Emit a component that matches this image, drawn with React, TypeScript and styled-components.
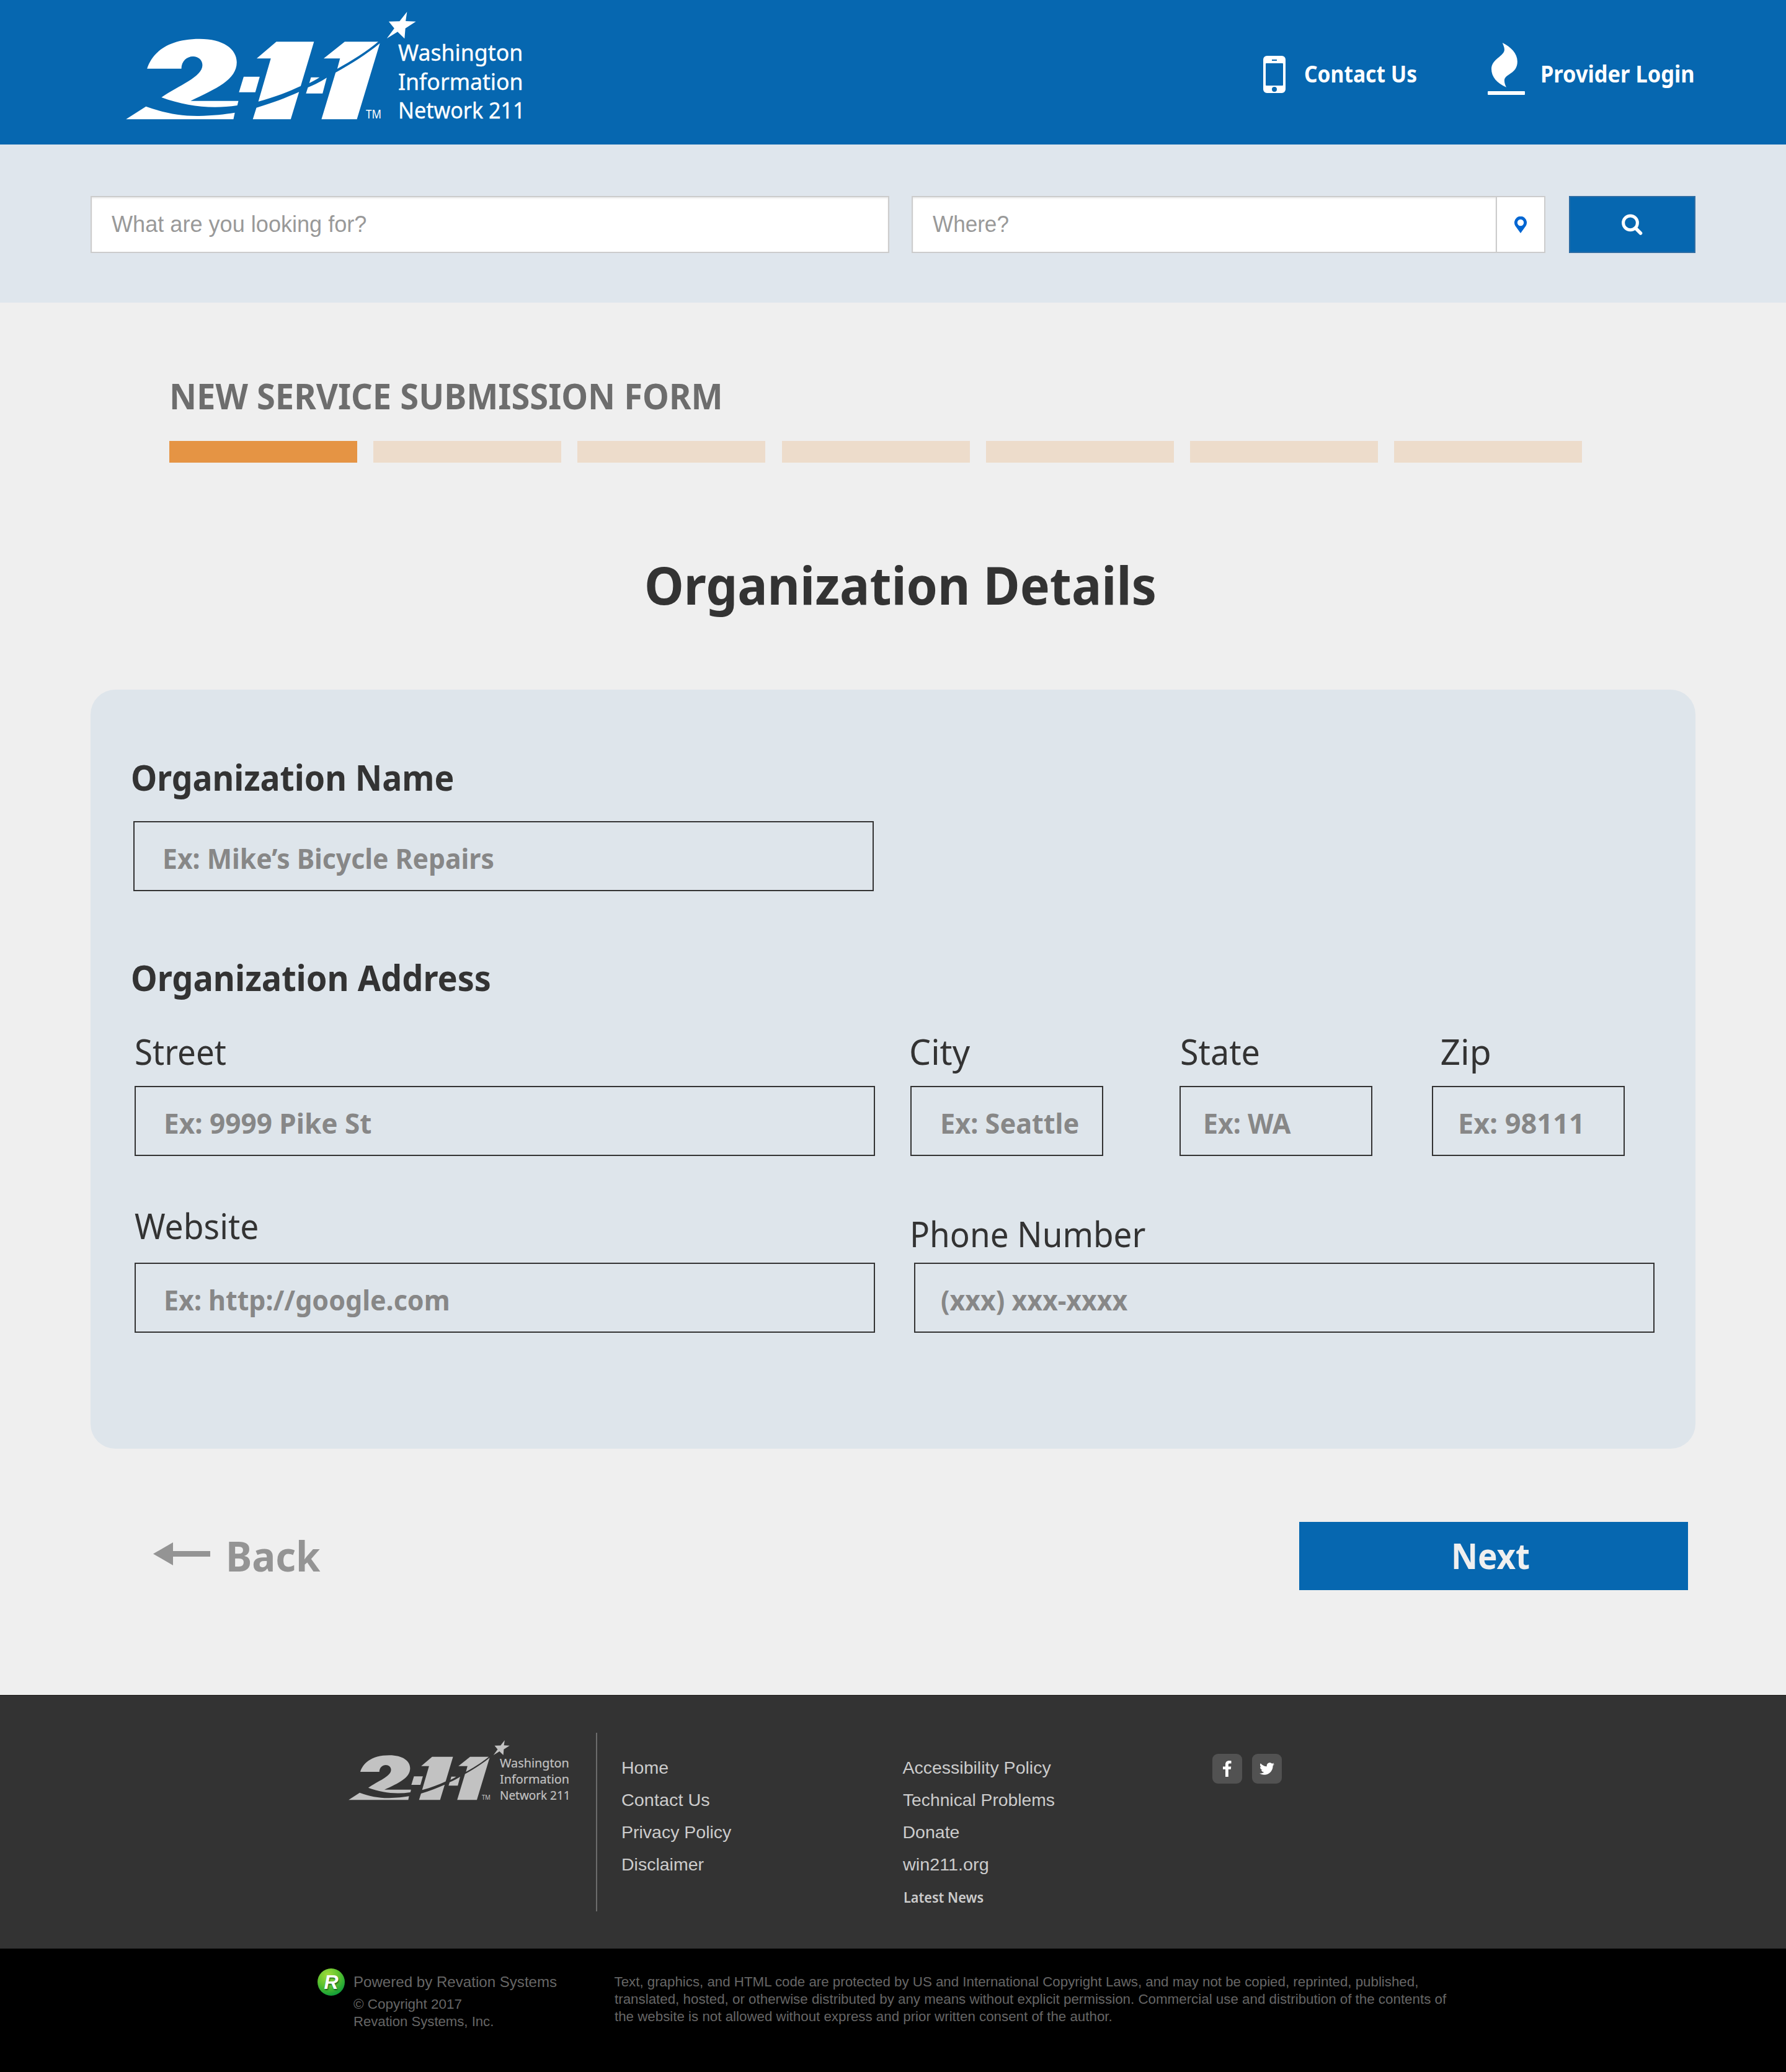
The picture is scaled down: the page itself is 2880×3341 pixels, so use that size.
import React from "react";
import styled, { createGlobalStyle } from "styled-components";
import { FaTwitter } from "react-icons/fa";

const humanist = `"Noto Sans", "Open Sans", sans-serif`;
const grotesque = `"Liberation Sans", Arial, sans-serif`;
const blue = "#0667b0";
const ink = "#333333";

const GlobalStyle = createGlobalStyle`
  *, *::before, *::after { box-sizing: border-box; }
  body { margin: 0; background: #efefef; font-family: ${humanist}; color: ${ink}; }
  h1, h2, h3, p, ul { margin: 0; padding: 0; font-weight: inherit; font-size: inherit; }
  ul { list-style: none; }
  a { color: inherit; text-decoration: none; }
  svg { display: block; flex: none; }
`;

const Page = styled.div`
  width: 2880px;
  height: 3341px;
  display: flex;
  flex-direction: column;
  overflow: hidden;
`;

/* Slightly condenses a run of text, anchored at its left edge. */
const Fit = styled.span<{ $k?: number }>`
  display: inline-block;
  white-space: nowrap;
  transform-origin: 0 50%;
  transform: scaleX(${(p) => p.$k ?? 1});
`;

/* ---------- logo ---------- */

const LogoBox = styled.div<{ $size: number; $color: string }>`
  display: flex;
  align-items: flex-end;
  font-size: ${(p) => p.$size}px;
  color: ${(p) => p.$color};
  height: 4.815em;
`;

const LogoMark = styled.svg`
  width: 13em;
  height: 4.815em;
  overflow: visible;
  fill: currentColor;
`;

const LogoWords = styled.div`
  display: flex;
  flex-direction: column;
  margin: 0 0 -0.25em -0.81em;
  line-height: 1.283em;
  -webkit-text-stroke: 0.01em currentColor;
`;

function Logo({ size, color }: { size: number; color: string }) {
  return (
    <LogoBox $size={size} $color={color}>
      <LogoMark viewBox="203 18.7 468 173.3">
        <g transform="translate(180 0) scale(.44643 .33333)">
          <path d="M128 331C145 262 195 187 318 187C402 187 452 235 452 300C452 385 378 428 285 487L458 487L454 509C362 528 270 514 180 470C242 412 328 372 328 314C328 288 312 272 294 272C272 272 252 295 252 331Z" />
          <path d="M52 576L124 514C190 546 250 561 315 560C365 558 410 552 445 544L440 576Z" />
          <path d="M477 370L535 370L519 445L460 445Z" />
          <path d="M595 201L731 201L683 415C640 442 590 468 530 490L575 282L524 282Z" />
          <path d="M523 520C580 498 630 472 677 444L647 576L510 576Z" />
          <path d="M720 373L751 373C740 383 728 393 714 401Z" />
          <path d="M777 375L762 451L702 451L709 422C735 408 758 392 777 375Z" />
          <path d="M842 201L963 201C925 245 865 295 815 332L825 282L766 282Z" />
          <path d="M969 208L886 576L758 576L809 350C865 308 920 262 969 208Z" />
          <path d="M1067 56L1062 101L1099 103L1061 136L1058 186L1033 153L994 185L1021 136L1001 103L1040 102Z" />
        </g>
        <text x="590" y="191" fontSize="19" textLength="25" lengthAdjust="spacingAndGlyphs">
          TM
        </text>
      </LogoMark>
      <LogoWords>
        <Fit $k={0.991}>Washington</Fit>
        <Fit $k={0.99}>Information</Fit>
        <Fit $k={0.947}>Network 211</Fit>
      </LogoWords>
    </LogoBox>
  );
}

/* ---------- header ---------- */

const Header = styled.header`
  flex: none;
  height: 233px;
  display: flex;
  justify-content: space-between;
  align-items: flex-start;
  padding: 18.7px 0 0 203px;
  background: ${blue};
`;

const HeaderNav = styled.nav`
  width: 843px;
  height: 134.3px;
  display: grid;
  grid-template-columns: 362px 481px;
  align-items: end;
  color: #fff;
`;

const NavItem = styled.a<{ $gap: number }>`
  display: flex;
  align-items: flex-end;
  gap: ${(p) => p.$gap}px;
`;

const NavText = styled.span`
  font-size: 37px;
  line-height: 37px;
  font-weight: 700;
  margin-bottom: 16px;
`;

const PhoneGlyph = styled.svg`
  width: 36px;
  height: 60px;
  margin-bottom: 3px;
`;

/* ---------- search ---------- */

const SearchBand = styled.form`
  flex: none;
  height: 255px;
  display: flex;
  align-items: flex-start;
  padding: 83px 146px 0;
  background: #dfe6ed;
`;

const SearchField = styled.div<{ $width: number }>`
  width: ${(p) => p.$width}px;
  height: 92px;
  display: flex;
  align-items: center;
  padding-left: 32px;
  border: 2px solid #cccccc;
  background: #fff;
  box-shadow: inset 0 2px 3px rgba(0, 0, 0, 0.08);
  font-family: ${grotesque};
  font-size: 36px;
  color: #999999;
`;

const WhereGroup = styled.div`
  display: flex;
  margin: 0 38px 0 36px;
`;

const PinAddon = styled.div`
  width: 78px;
  height: 92px;
  display: flex;
  align-items: center;
  justify-content: center;
  border: 2px solid #cccccc;
  border-left: 0;
  background: #fff;
`;

const SearchButton = styled.button`
  width: 204px;
  height: 92px;
  display: flex;
  align-items: center;
  justify-content: center;
  padding: 0;
  border: 2px solid #2e6da4;
  background: ${blue};
`;

/* ---------- form ---------- */

const Main = styled.main`
  flex: none;
  height: 2245px;
  display: flex;
  flex-direction: column;
  padding-top: 122px;
`;

const FormTitle = styled.h1`
  margin-left: 272.5px;
  font-size: 57px;
  line-height: 57px;
  font-weight: 700;
  color: #6d6d6d;
`;

const Steps = styled.div`
  display: grid;
  grid-template-columns: repeat(7, 303px);
  column-gap: 26.2px;
  margin: 44px 0 154px 273px;
`;

const Step = styled.div<{ $active?: boolean }>`
  height: 35px;
  background: ${(p) => (p.$active ? "#e59444" : "#eddccb")};
`;

const SectionTitle = styled.h2`
  margin: 0 0 127px 1039px;
  font-size: 85px;
  line-height: 85px;
  font-weight: 700;
`;

const Panel = styled.section`
  width: 2588px;
  height: 1224px;
  flex: none;
  margin-left: 146px;
  padding: 113px 0 0 65px;
  border-radius: 40px;
  background: #dee5eb;
`;

const GroupTitle = styled.h3`
  font-size: 57px;
  line-height: 57px;
  font-weight: 700;
`;

const NameSlot = styled.div`
  margin: 42px 0 111px 4px;
`;

const AddressRow = styled.div`
  display: grid;
  grid-template-columns: 1251px 434px 407px 311px;
  margin: 62px 0 84px 6px;
`;

const ContactRow = styled.div`
  display: grid;
  grid-template-columns: 1257px 1194px;
  align-items: end;
  margin-left: 6px;
`;

const Field = styled.label<{ $gap: number }>`
  display: flex;
  flex-direction: column;
  gap: ${(p) => p.$gap}px;
`;

const FieldLabel = styled.span<{ $shift: number }>`
  margin-left: ${(p) => p.$shift}px;
  font-size: 57px;
  line-height: 57px;
`;

const FieldBox = styled.div<{ $width?: number; $pad?: number }>`
  width: ${(p) => p.$width ?? 1194}px;
  height: 113px;
  display: flex;
  align-items: center;
  padding: 5px 0 0 ${(p) => p.$pad ?? 44.5}px;
  border: 2px solid ${ink};
  font-size: 45.5px;
  line-height: 46px;
  font-weight: 700;
  color: #878787;
`;

const Actions = styled.div`
  display: flex;
  justify-content: space-between;
  align-items: center;
  height: 110px;
  margin-top: 118px;
  padding: 0 158px 0 247px;
`;

const BackLink = styled.a`
  display: flex;
  align-items: center;
  gap: 25px;
  padding-bottom: 2px;
  font-size: 67px;
  line-height: 67px;
  font-weight: 700;
  color: #949494;
`;

const ArrowGlyph = styled.svg`
  width: 92px;
  height: 37px;
  margin-bottom: 5px;
`;

const NextButton = styled.button`
  width: 627px;
  height: 110px;
  display: flex;
  align-items: center;
  padding: 0 0 1px 244.5px;
  border: 0;
  background: ${blue};
  color: #efefef;
  font-family: ${humanist};
  font-size: 57px;
  line-height: 57px;
  font-weight: 700;
`;

/* ---------- footer ---------- */

const Footer = styled.footer`
  flex: none;
  height: 409px;
  display: grid;
  grid-template-columns: 398.5px 494px 499px auto;
  align-items: start;
  padding: 60px 0 0 562px;
  border-top: 1px solid #1c1917;
  background: #333333;
`;

const FooterLogo = styled.div`
  margin-top: 12px;
`;

const LinkColumn = styled.ul<{ $ruled?: boolean }>`
  height: 288px;
  padding: 30px 0 0 ${(p) => (p.$ruled ? 39.500 : 1)}px;
  border-left: ${(p) => (p.$ruled ? "2px solid #6c6c6c" : "0")};
  font-family: ${grotesque};
  font-size: 28.5px;
  line-height: 52px;
  color: #cccccc;
`;

const NewsLink = styled.a`
  display: block;
  padding: 2px 0 0 1px;
  font-family: ${humanist};
  font-size: 22.5px;
  font-weight: 600;
`;

const Socials = styled.div`
  display: flex;
  gap: 16px;
  margin: 34px 0 0 1px;
`;

const SocialTile = styled.a`
  width: 48px;
  height: 48px;
  display: flex;
  align-items: center;
  justify-content: center;
  border-radius: 9px;
  background: #525252;
  color: #fff;
  font-size: 24px;
`;

const Legal = styled.div`
  flex: none;
  height: 199px;
  display: grid;
  grid-template-columns: 57.5px 421px auto;
  align-items: start;
  padding: 32px 0 0 512px;
  background: #000;
  font-family: ${grotesque};
  font-size: 22px;
  line-height: 28px;
  color: #666666;
`;

const Badge = styled.div`
  width: 44px;
  height: 44px;
  display: flex;
  align-items: center;
  justify-content: center;
  border-radius: 50%;
  background: radial-gradient(circle at 38% 25%, #a4dc3c 0%, #5cc22e 42%, #0d9c3a 80%, #078a34 100%);
  font-size: 32px;
  line-height: 44px;
  font-weight: 700;
  font-style: italic;
  color: #fff;
  text-shadow: 1px 2px 2px rgba(0, 70, 20, 0.7);
`;

const PoweredBy = styled.p`
  font-size: 24px;
  line-height: 44px;
`;

const Notice = styled.div`
  margin-top: 8px;
  font-size: 22.3px;
  white-space: nowrap;
`;

const addressFields = [
  { label: "Street", k: 0.93, shift: 0, hint: "Ex: 9999 Pike St", hk: 0.969, pad: 44.5 },
  { label: "City", k: 0.977, shift: -2, hint: "Ex: Seattle", hk: 0.95, width: 311, pad: 45.5 },
  { label: "State", k: 0.944, shift: 0.5, hint: "Ex: WA", hk: 0.942, width: 311, pad: 35.5 },
  { label: "Zip", k: 1, shift: 13.5, hint: "Ex: 98111", hk: 0.99, width: 311, pad: 40 },
];

export default function App() {
  return (
    <Page>
      <GlobalStyle />
      <Header>
        <Logo size={36} color="#ffffff" />
        <HeaderNav>
          <NavItem $gap={29.5}>
            <PhoneGlyph viewBox="0 0 36 60">
              <path
                fill="#fff"
                fillRule="evenodd"
                d="M6 0H30A6 6 0 0 1 36 6V54A6 6 0 0 1 30 60H6A6 6 0 0 1 0 54V6A6 6 0 0 1 6 0ZM5 12A1 1 0 0 0 4 13V47A1 1 0 0 0 5 48H31A1 1 0 0 0 32 47V13A1 1 0 0 0 31 12ZM14 6V8H22V6ZM18 50A4 4 0 0 0 18 58A4 4 0 0 0 18 50Z"
              />
            </PhoneGlyph>
            <NavText>
              <Fit $k={0.908}>Contact Us</Fit>
            </NavText>
          </NavItem>
          <NavItem $gap={24.5}>
            <svg width="60" height="84" viewBox="0 0 60 84" fill="#fff">
              <path
                transform="translate(-419 -29) scale(.5102 .33333)"
                d="M868 87C895 108 915 138 915 178C915 240 874 236 874 270C874 283 877 292 880 302C850 282 833 252 833 214C833 165 874 152 874 120C874 107 870 98 868 87Z"
              />
              <rect y="78" width="60" height="6" rx="1" />
            </svg>
            <NavText>
              <Fit $k={0.93}>Provider Login</Fit>
            </NavText>
          </NavItem>
        </HeaderNav>
      </Header>

      <SearchBand>
        <SearchField $width={1288}>
          <Fit $k={1.003}>What are you looking for?</Fit>
        </SearchField>
        <WhereGroup>
          <SearchField $width={944}>
            <Fit $k={0.975}>Where?</Fit>
          </SearchField>
          <PinAddon>
            <svg width="20" height="27" viewBox="0 0 20 27">
              <path
                fill="#0066d2"
                fillRule="evenodd"
                d="M10 27L1.500 15.300A10 10.200 0 1 1 18.500 15.300ZM10 4.800A5.200 5.200 0 0 0 10 15.200A5.200 5.200 0 0 0 10 4.800Z"
              />
            </svg>
          </PinAddon>
        </WhereGroup>
        <SearchButton type="button">
          <svg width="34" height="34" viewBox="0 0 34 34" fill="none" stroke="#fff" strokeWidth="5">
            <circle cx="14" cy="14.3" r="11.4" />
            <path d="M22.5 23L30.5 31" strokeLinecap="round" strokeWidth="5.5" />
          </svg>
        </SearchButton>
      </SearchBand>

      <Main>
        <FormTitle>
          <Fit $k={0.951}>NEW SERVICE SUBMISSION FORM</Fit>
        </FormTitle>
        <Steps>
          {[0, 1, 2, 3, 4, 5, 6].map((n) => (
            <Step key={n} $active={n === 0} />
          ))}
        </Steps>
        <SectionTitle>
          <Fit $k={0.95}>Organization Details</Fit>
        </SectionTitle>

        <Panel>
          <GroupTitle>
            <Fit $k={0.938}>Organization Name</Fit>
          </GroupTitle>
          <NameSlot>
            <FieldBox>
              <Fit $k={0.938}>Ex: Mike’s Bicycle Repairs</Fit>
            </FieldBox>
          </NameSlot>
          <GroupTitle>
            <Fit $k={0.948}>Organization Address</Fit>
          </GroupTitle>
          <AddressRow>
            {addressFields.map((f) => (
              <Field key={f.label} $gap={27}>
                <FieldLabel $shift={f.shift}>
                  <Fit $k={f.k}>{f.label}</Fit>
                </FieldLabel>
                <FieldBox $width={f.width} $pad={f.pad}>
                  <Fit $k={f.hk}>{f.hint}</Fit>
                </FieldBox>
              </Field>
            ))}
          </AddressRow>
          <ContactRow>
            <Field $gap={31}>
              <FieldLabel $shift={0}>
                <Fit $k={0.937}>Website</Fit>
              </FieldLabel>
              <FieldBox>
                <Fit $k={0.944}>Ex: http://google.com</Fit>
              </FieldBox>
            </Field>
            <Field $gap={18}>
              <FieldLabel $shift={-7}>
                <Fit $k={0.93}>Phone Number</Fit>
              </FieldLabel>
              <FieldBox $pad={41}>
                <Fit $k={0.941}>(xxx) xxx-xxxx</Fit>
              </FieldBox>
            </Field>
          </ContactRow>
        </Panel>

        <Actions>
          <BackLink>
            <ArrowGlyph viewBox="0 0 92 37">
              <path fill="currentColor" d="M0 18.5L32 0V14H92V23H32V37Z" />
            </ArrowGlyph>
            <Fit $k={0.948}>Back</Fit>
          </BackLink>
          <NextButton type="button">
            <Fit $k={0.928}>Next</Fit>
          </NextButton>
        </Actions>
      </Main>

      <Footer>
        <FooterLogo>
          <Logo size={20} color="#c2c2c2" />
        </FooterLogo>
        <LinkColumn $ruled>
          <li>Home</li>
          <li>
            <Fit $k={1.012}>Contact Us</Fit>
          </li>
          <li>Privacy Policy</li>
          <li>Disclaimer</li>
        </LinkColumn>
        <LinkColumn>
          <li>Accessibility Policy</li>
          <li>
            <Fit $k={0.991}>Technical Problems</Fit>
          </li>
          <li>Donate</li>
          <li>
            <Fit $k={1.01}>win211.org</Fit>
          </li>
          <li>
            <NewsLink>
              <Fit $k={0.962}>Latest News</Fit>
            </NewsLink>
          </li>
        </LinkColumn>
        <Socials>
          <SocialTile>
            <svg width="15" height="26" viewBox="0 0 15 26">
              <path
                fill="currentColor"
                d="M14.5 .3V4.4H12C10.100 4.400 9.800 5.300 9.800 6.600V9.500H14.300L13.700 14.100H9.800V26H5V14.100H1V9.500H5V6.100C5 2.200 7.500 0 11 0C12.600 0 14 .1 14.500 .3Z"
              />
            </svg>
          </SocialTile>
          <SocialTile>
            <FaTwitter />
          </SocialTile>
        </Socials>
      </Footer>

      <Legal>
        <Badge>R</Badge>
        <div>
          <PoweredBy>
            <Fit $k={1.004}>Powered by Revation Systems</Fit>
          </PoweredBy>
          <p>
            <Fit $k={1.02}>© Copyright 2017</Fit>
          </p>
          <p>
            <Fit $k={1.006}>Revation Systems, Inc.</Fit>
          </p>
        </div>
        <Notice>
          <p>Text, graphics, and HTML code are protected by US and International Copyright Laws, and may not be copied, reprinted, published,</p>
          <p>
            <Fit $k={1.002}>
              translated, hosted, or otherwise distributed by any means without explicit permission. Commercial use and distribution of the contents of
            </Fit>
          </p>
          <p>
            <Fit $k={1.001}>the website is not allowed without express and prior written consent of the author.</Fit>
          </p>
        </Notice>
      </Legal>
    </Page>
  );
}
